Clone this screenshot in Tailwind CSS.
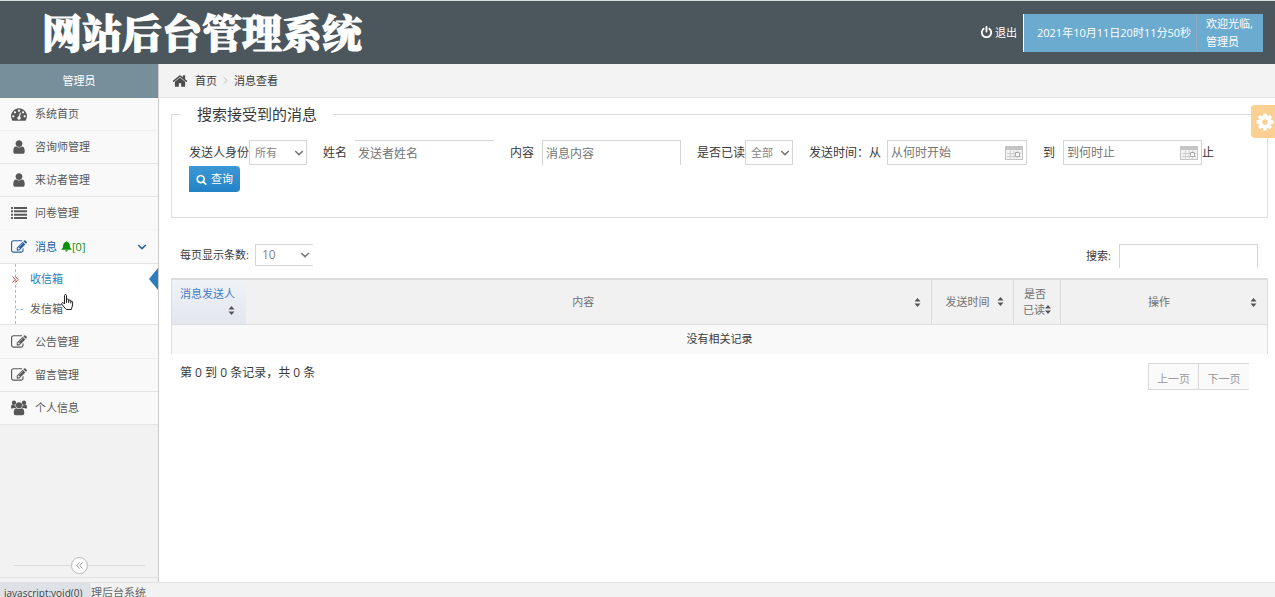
<!DOCTYPE html>
<html lang="zh-CN">
<head>
<meta charset="utf-8">
<title>网站后台管理系统</title>
<script src="https://cdn.jsdelivr.net/npm/@tailwindcss/browser@4"></script>
</head>
<body class="flex min-h-screen flex-col bg-white font-['Open_Sans','Noto_Sans_CJK_SC',sans-serif] text-[11px] leading-4 text-[#393939]">
<svg class="hidden" aria-hidden="true">
  <symbol id="user" viewBox="0 0 1792 1792"><path d="M1536 1399q0 109-62.500 187t-150.500 78h-854q-88 0-150.500-78t-62.500-187q0-85 8.500-160.500t31.500-152 58.500-131 94-89 134.500-34.500q131 128 313 128t313-128q76 0 134.500 34.500t94 89 58.500 131 31.500 152 8.500 160.500zm-256-887q0 159-112.500 271.500t-271.500 112.500-271.500-112.500-112.500-271.500 112.500-271.500 271.500-112.500 271.500 112.500 112.500 271.500z"/></symbol>
  <symbol id="edit" viewBox="0 0 1792 1792"><path d="M888 1184l116-116-152-152-116 116v56h96v96h56zm440-720q-16-16-33 1l-350 350q-17 17-1 33t33-1l350-350q17-17 1-33zm80 594v190q0 119-84.500 203.500t-203.500 84.500h-832q-119 0-203.500-84.500t-84.500-203.500v-832q0-119 84.500-203.500t203.500-84.500h832q63 0 117 25 15 7 18 23 3 17-9 29l-49 49q-14 14-32 8-23-6-45-6h-832q-66 0-113 47t-47 113v832q0 66 47 113t113 47h832q66 0 113-47t47-113v-126q0-13 9-22l64-64q15-15 35-7t20 29zm-96-738l288 288-672 672h-288v-288zm444 132l-92 92-288-288 92-92q28-28 68-28t68 28l152 152q28 28 28 68t-28 68z"/></symbol>
  <symbol id="home" viewBox="0 0 1792 1792"><path d="M1472 992v480q0 26-19 45t-45 19h-384v-384h-256v384h-384q-26 0-45-19t-19-45v-480q0-1 .5-3t.5-3l575-474 575 474q1 2 1 6zm223-69l-62 74q-8 9-21 11h-3q-13 0-21-7l-692-577-692 577q-12 8-24 7-13-2-21-11l-62-74q-8-10-7-23.500t11-21.500l719-599q32-26 76-26t76 26l244 204v-195q0-14 9-23t23-9h192q14 0 23 9t9 23v408l219 182q10 8 11 21.500t-7 23.500z"/></symbol>
  <symbol id="search" viewBox="0 0 1792 1792"><path d="M1216 832q0-185-131.500-316.500t-316.500-131.500-316.500 131.500-131.500 316.500 131.500 316.500 316.500 131.500 316.500-131.500 131.500-316.500zm512 832q0 52-38 90t-90 38q-54 0-90-38l-343-342q-179 124-399 124-143 0-273.500-55.500t-225-150-150-225-55.500-273.500 55.500-273.500 150-225 225-150 273.500-55.500 273.500 55.500 225 150 150 225 55.500 273.500q0 220-124 399l343 343q37 37 37 90z"/></symbol>
  <symbol id="cog" viewBox="0 0 1792 1792"><path d="M1152 896q0-106-75-181t-181-75-181 75-75 181 75 181 181 75 181-75 75-181zm512-109v222q0 12-8 23t-20 13l-185 28q-19 54-39 91 35 50 107 138 10 12 10 25t-9 23q-27 37-99 108t-94 71q-12 0-26-9l-138-108q-44 23-91 38-16 136-29 186-7 28-36 28h-222q-14 0-24.500-8.500t-11.500-21.500l-28-184q-49-16-90-37l-141 107q-10 9-25 9-14 0-25-11-126-114-165-168-7-10-7-23 0-12 8-23 15-21 51-66.500t54-70.500q-27-50-41-99l-183-27q-13-2-21-12.500t-8-23.500v-222q0-12 8-23t19-13l186-28q14-46 39-92-40-57-107-138-10-12-10-24 0-10 9-23 26-36 98.500-107.500t94.500-71.500q13 0 26 10l138 107q44-23 91-38 16-136 29-186 7-28 36-28h222q14 0 24.500 8.500t11.500 21.500l28 184q49 16 90 37l142-107q9-9 24-9 13 0 25 10 129 119 165 170 7 8 7 22 0 12-8 23-15 21-51 66.500t-54 70.500q26 50 41 98l183 28q13 2 21 12.500t8 23.500z"/></symbol>
  <symbol id="power" viewBox="0 0 1792 1792"><path d="M1664 896q0 156-61 298t-164 245-245 164-298 61-298-61-245-164-164-245-61-298q0-182 80.500-343t226.500-270q43-32 95.500-25t83.500 50q32 42 24.500 94.500t-49.500 84.500q-98 74-151.500 181t-53.500 228q0 104 40.500 198.500t109.500 163.500 163.500 109.500 198.500 40.500 198.500-40.500 163.500-109.500 109.500-163.500 40.500-198.500q0-121-53.500-228t-151.500-181q-42-32-49.500-84.500t24.500-94.500q31-43 84-50t95 25q146 109 226.500 270t80.500 343zm-640-768v640q0 52-38 90t-90 38-90-38-38-90v-640q0-52 38-90t90-38 90 38 38 90z"/></symbol>
  <symbol id="dash" viewBox="0 0 1792 1792"><path d="M384 1152q0-53-37.500-90.500t-90.500-37.500-90.500 37.500-37.500 90.500 37.500 90.500 90.500 37.500 90.500-37.500 37.500-90.500zm192-448q0-53-37.500-90.500t-90.500-37.500-90.500 37.500-37.500 90.500 37.500 90.500 90.500 37.500 90.500-37.500 37.500-90.500zm428 481l101-382q6-26-7.500-48.500t-38.500-29.500-48 6.500-30 39.500l-101 382q-60 5-107 43.500t-63 98.500q-20 77 20 146t117 89 146-20 89-117q16-60-6-117t-72-91zm660-33q0-53-37.500-90.500t-90.500-37.500-90.500 37.500-37.500 90.500 37.500 90.500 90.500 37.500 90.500-37.500 37.500-90.500zm-640-640q0-53-37.500-90.500t-90.500-37.500-90.500 37.500-37.500 90.500 37.500 90.500 90.500 37.500 90.500-37.500 37.500-90.500zm448 192q0-53-37.500-90.500t-90.500-37.500-90.500 37.500-37.500 90.500 37.500 90.500 90.500 37.500 90.500-37.500 37.500-90.500zm320 448q0 261-141 483-19 29-54 29h-1402q-35 0-54-29-141-221-141-483 0-182 71-348t191-286 286-191 348-71 348 71 286 191 191 286 71 348z"/></symbol>
  <symbol id="list" viewBox="0 0 16 16"><path d="M0 2h2v2H0zM3 2h13v2H3zM0 5.300h2v2H0zM3 5.300h13v2H3zM0 8.700h2v2H0zM3 8.700h13v2H3zM0 12h2v2H0zM3 12h13v2H3z"/></symbol>
  <symbol id="users" viewBox="0 0 16 16"><circle cx="3" cy="2.800" r="2.200"/><circle cx="13" cy="2.800" r="2.200"/><circle cx="8" cy="5.300" r="3.100"/><path d="M0 8V7q0-2.500 1.300-2.500Q3 5.600 4.300 5q0 2 1 3H3q-1 0-1.500.500Q0 8.700 0 8zM16 8V7q0-2.500-1.300-2.500Q13 5.600 11.700 5q0 2-1 3H13q1 0 1.500.500Q16 8.700 16 8zM2.700 13q0-4.800 2.700-4.800Q8 10 10.600 8.200q2.700 0 2.700 4.800 0 2.300-2 2.300H4.700q-2 0-2-2.300z"/></symbol>
  <symbol id="bell" viewBox="0 0 12 12"><path d="M5.200 1a.8.8 0 0 1 1.600 0Q9.600 1.600 9.600 5q0 3 2.200 4.600H.2Q2.400 8 2.400 5q0-3.400 2.800-4zM4.500 10.200h3q-.3 1.600-1.500 1.600t-1.500-1.600z"/></symbol>
  <symbol id="down" viewBox="0 0 10 6"><path d="M1.200 1 5 4.600 8.800 1" fill="none" stroke="currentColor" stroke-width="1.500"/></symbol>
  <symbol id="sort" viewBox="0 0 6 9"><path d="M3 0 6 3.600H0zM3 9 0 5.400h6z"/></symbol>
  <symbol id="cal" viewBox="0 0 18 14"><path fill="#c4c4c4" d="M0 0h18v14H0z"/><path fill="#f3f3f3" d="M1 4h16v9H1z"/><path d="M2 7.500h14M2 10.500h14M5.500 4.500v8M9 4.500v8M12.500 4.500v8" stroke="#cfcfcf" fill="none"/><path d="M10.500 6.500h4v4h-4z" fill="#fff" stroke="#aaa"/></symbol>
</svg>

<header class="flex h-16 items-center justify-between border-t border-[#d5dfdf] bg-[#4b575c] pr-3 pl-[42px] text-white">
  <h1 class="pb-1 font-['Noto_Serif_CJK_SC','Noto_Sans_CJK_SC',serif] text-[40px] leading-[56px] font-black whitespace-nowrap [-webkit-text-stroke:1px_white]">网站后台管理系统</h1>
  <div class="flex items-center">
    <a href="#" class="mr-[6px] flex items-center gap-[2px]"><svg class="size-[13px] fill-current"><use href="#power"/></svg>退出</a>
    <div class="flex h-[38px] items-stretch border-l border-white bg-[#6aabcf]">
      <time class="flex w-[173px] items-center border-r border-[#8fa9bd] pl-[13px] whitespace-nowrap">2021年10月11日20时11分50秒</time>
      <p class="flex w-[66px] flex-col justify-center pl-[9px] text-[11px] leading-[18px]"><span>欢迎光临,</span><span>管理员</span></p>
    </div>
  </div>
</header>

<div class="flex flex-1">
  <aside class="flex w-[159px] shrink-0 flex-col border-r border-[#ccc] bg-[#f2f2f2] text-[#585858]">
    <div class="flex h-[34px] items-center justify-center bg-[#778f9b] text-white">管理员</div>
    <nav>
      <a href="#" class="flex h-[33px] items-center gap-2 border-b border-[#f1f1f1] bg-[#f9f9f9] pl-[11px]"><svg class="size-4 fill-current"><use href="#dash"/></svg>系统首页</a>
      <a href="#" class="flex h-[33px] items-center gap-2 border-b border-[#e5e5e5] bg-[#f9f9f9] pl-[11px]"><svg class="size-4 fill-current"><use href="#user"/></svg>咨询师管理</a>
      <a href="#" class="flex h-[33px] items-center gap-2 border-b border-[#e5e5e5] bg-[#f9f9f9] pl-[11px]"><svg class="size-4 fill-current"><use href="#user"/></svg>来访者管理</a>
      <a href="#" class="flex h-[33px] items-center gap-2 border-b border-[#f5f5f5] bg-[#f9f9f9] pl-[11px]"><svg class="size-4 fill-current"><use href="#list"/></svg>问卷管理</a>
      <a href="#" class="flex h-[34px] items-center gap-2 border-b border-[#e5e5e5] bg-[#f9f9f9] pr-[11px] pl-[11px] text-[#2a5f9e]"><svg class="size-4 fill-current"><use href="#edit"/></svg><span class="flex flex-1 items-center">消息<span class="ml-1 flex items-center text-[#0a8f0a]"><svg class="size-[11px] fill-current"><use href="#bell"/></svg>[0]</span></span><svg class="h-[6px] w-[10px]"><use href="#down"/></svg></a>
      <div class="relative border-b border-[#e5e5e5] bg-white">
        <div class="absolute inset-y-0 left-[15px] border-l border-dashed border-[#9dbdd6]"></div>
        <a href="#" class="relative flex h-[30px] items-center pl-[30px] text-[#2b7dbc]"><svg class="absolute left-3 h-[7px] w-[7px]" viewBox="0 0 7 7" fill="none" stroke="#c0453a"><path d="M.5.500 3 3.500.5 6.500M3.500.500 6 3.500 3.500 6.500"/></svg>收信箱<svg class="absolute right-0 h-[22px] w-[9px] fill-[#2b7dbc]" viewBox="0 0 9 22"><path d="M9 0v22L0 11z"/></svg></a>
        <a href="#" class="relative flex h-[30px] items-center pl-[30px]"><span class="absolute left-4 w-[7px] border-t border-dashed border-[#9dbdd6]"></span>发信箱</a>
        <svg class="absolute top-[30px] left-[61px] h-4 w-[13px]" viewBox="0 0 13 16" fill="#fff" stroke="#222"><path d="M3.500 10V1.500q0-1 1-1t1 1V6q0-1 1-1t1.200 1v1q0-1 1-1t1.100 1v1q0-.8.900-.8t.9 1V11l-1.300 4.500H5.200L1 10.500Q.3 9 1.500 8.500 2.500 8.500 3.500 10zM5.500 6v3M7.700 7v2M9.800 8v1.500"/></svg>
      </div>
      <a href="#" class="flex h-[34px] items-center gap-2 border-b border-[#eee] bg-[#f9f9f9] pl-[11px]"><svg class="size-4 fill-current"><use href="#edit"/></svg>公告管理</a>
      <a href="#" class="flex h-[33px] items-center gap-2 border-b border-[#e5e5e5] bg-[#f9f9f9] pl-[11px]"><svg class="size-4 fill-current"><use href="#edit"/></svg>留言管理</a>
      <a href="#" class="flex h-[33px] items-center gap-2 border-b border-[#e5e5e5] bg-[#f9f9f9] pl-[11px]"><svg class="size-4 fill-current"><use href="#users"/></svg>个人信息</a>
    </nav>
    <div class="mt-auto mb-1 flex items-center border-b border-[#e0e0e0] px-[13px] pb-[3px]">
      <div class="flex-1 border-t border-[#dcdcdc]"></div>
      <button type="button" aria-label="收起菜单" class="flex size-[17px] items-center justify-center rounded-full border border-[#bbb] bg-white text-[#999]"><svg class="size-[7px]" viewBox="0 0 7 7" fill="none" stroke="currentColor"><path d="M3.500.500.8 3.500l2.700 3M6.500.500 3.800 3.500l2.700 3"/></svg></button>
      <div class="flex-1 border-t border-[#dcdcdc]"></div>
    </div>
  </aside>

  <main class="relative min-w-0 flex-1">
    <nav class="flex h-[34px] items-center border-b border-[#e5e5e5] bg-[#f3f3f3] pl-[13px]">
      <svg class="mr-[7px] size-4 fill-[#4c4c4c]"><use href="#home"/></svg><a href="#">首页</a>
      <svg class="mx-[6px] h-[7px] w-[5px]" viewBox="0 0 5 7" fill="none" stroke="#b2b6bf"><path d="M1 .5 4 3.500 1 6.500"/></svg><span>消息查看</span>
    </nav>
    <button type="button" aria-label="设置" class="absolute top-[41px] right-0 flex h-[33px] w-6 items-center justify-end rounded-l bg-[#fccf93]"><svg class="size-5 shrink-0 fill-white"><use href="#cog"/></svg></button>

    <div class="pt-1 pr-[7px] pl-3">
      <form>
        <fieldset class="border border-[#ddd] pr-4 pb-[25px] pl-[17px] text-[12px]">
          <legend class="-ml-2 px-4 text-[15px] leading-6">搜索接受到的消息</legend>
          <div class="mt-[14px] flex flex-wrap items-center gap-x-4 gap-y-px">
            <div class="flex items-center"><label for="role">发送人身份</label>
              <div class="relative"><select id="role" class="h-[25px] w-[58px] appearance-none border border-[#d5d5d5] bg-white pl-[5px] text-[11px] text-[#858585]"><option>所有</option></select><svg class="pointer-events-none absolute top-[10px] right-[3px] h-[6px] w-[10px] text-[#777]"><use href="#down"/></svg></div></div>
            <div class="flex items-center gap-2"><label for="name">姓名</label><input id="name" placeholder="发送者姓名" class="h-[25px] w-[139px] border-t border-[#d5d5d5] px-[3px] text-[12px] placeholder:text-[#757575]"></div>
            <div class="flex items-center gap-2"><label for="content">内容</label><input id="content" placeholder="消息内容" class="h-[25px] w-[139px] border border-b-0 border-[#d5d5d5] px-[3px] text-[12px] placeholder:text-[#757575]"></div>
            <div class="flex items-center"><label for="read">是否已读</label>
              <div class="relative"><select id="read" class="h-[25px] w-12 appearance-none border border-[#d5d5d5] bg-white pl-[5px] text-[11px] text-[#858585]"><option>全部</option></select><svg class="pointer-events-none absolute top-[10px] right-[3px] h-[6px] w-[10px] text-[#777]"><use href="#down"/></svg></div></div>
            <div class="flex items-center gap-[6px]"><label for="from">发送时间：从</label>
              <div class="relative"><input id="from" placeholder="从何时开始" class="h-[25px] w-[140px] border border-[#d5d5d5] px-[3px] text-[12px] placeholder:text-[#757575]"><svg class="absolute top-[6px] right-1 h-[14px] w-[18px]"><use href="#cal"/></svg></div></div>
            <div class="flex items-center"><label for="to" class="mr-2">到</label>
              <div class="relative"><input id="to" placeholder="到何时止" class="h-[25px] w-[139px] border border-[#d5d5d5] px-[3px] text-[12px] placeholder:text-[#757575]"><svg class="absolute top-[6px] right-1 h-[14px] w-[18px]"><use href="#cal"/></svg></div><span>止</span></div>
            <div class="w-full"><button type="submit" class="flex h-[26px] items-center gap-1 rounded-r-sm bg-linear-to-b from-[#3b98d6] to-[#2283c5] px-[7px] text-[11px] text-white"><svg class="size-[11px] fill-current"><use href="#search"/></svg>查询</button></div>
          </div>
        </fieldset>
      </form>

      <div class="mt-[26px] flex items-start justify-between pr-[10px] pl-[9px]">
        <div class="flex items-center gap-[6px]"><label for="len">每页显示条数:</label>
          <div class="relative"><select id="len" class="h-[22px] w-[58px] appearance-none border border-r-0 border-[#d5d5d5] bg-white pl-[6px] text-[12px] text-[#858585]"><option>10</option></select><svg class="pointer-events-none absolute top-2 right-[3px] h-[6px] w-[10px] text-[#777]"><use href="#down"/></svg></div></div>
        <div class="flex items-center gap-2"><label for="q">搜索:</label><input id="q" class="h-6 w-[139px] border border-b-0 border-[#d5d5d5] px-1 text-[12px]"></div>
      </div>

      <table class="mt-[10px] w-full table-fixed border-collapse border-x border-[#ddd]">
        <colgroup><col class="w-[74px]"><col><col class="w-[82px]"><col class="w-[47px]"><col class="w-[207px]"></colgroup>
        <thead>
          <tr class="h-[45px] border-t-2 border-b border-[#ddd] bg-[#f1f1f1] text-[#707070]">
            <th scope="col" class="bg-linear-to-b from-[#eff3f8] to-[#e3e7ed] font-normal"><div class="relative pb-4 pl-2 text-left text-[#3f7cc4]">消息发送人<svg class="absolute right-[11px] bottom-[3px] h-[9px] w-[7px] fill-[#555]"><use href="#sort"/></svg></div></th>
            <th scope="col" class="border-r border-[#ddd] font-normal"><div class="relative pr-[10px]">内容<svg class="absolute top-1 right-[10px] h-[9px] w-[7px] fill-[#555]"><use href="#sort"/></svg></div></th>
            <th scope="col" class="border-r border-[#ddd] font-normal"><div class="flex items-center justify-center gap-[7px] pl-1">发送时间<svg class="h-[9px] w-[7px] fill-[#555]"><use href="#sort"/></svg></div></th>
            <th scope="col" class="border-r border-[#ddd] font-normal"><div class="-ml-1">是否<br><span class="inline-flex items-center pl-1">已读<svg class="h-[9px] w-[6px] fill-[#555]"><use href="#sort"/></svg></span></div></th>
            <th scope="col" class="font-normal"><div class="relative pr-[10px]">操作<svg class="absolute top-1 right-[10px] h-[9px] w-[7px] fill-[#555]"><use href="#sort"/></svg></div></th>
          </tr>
        </thead>
        <tbody><tr class="h-[30px] bg-[#f9f9f9] text-center"><td colspan="5">没有相关记录</td></tr></tbody>
      </table>

      <div class="flex items-start justify-between pt-[9px] pr-[19px] pl-[9px]">
        <p class="text-[12px] leading-5">第 0 到 0 条记录，共 0 条</p>
        <div class="flex h-[27px] border border-r-0 border-[#d9d9d9] bg-[#fafafa] text-[#999]">
          <button type="button" disabled class="w-[50px] border-r border-[#d9d9d9] pt-1">上一页</button>
          <button type="button" disabled class="w-[50px] pt-1">下一页</button>
        </div>
      </div>
    </div>
  </main>
</div>

<footer class="relative h-[15px] overflow-hidden border-t border-[#e0e0e0] bg-[#f2f2f2] pl-[91px]">
  <p class="pt-[2px] text-[#666]">理后台系统</p>
  <div class="absolute top-0 left-0 h-5 w-[91px] rounded-tr-sm bg-[#dee1e6] pt-[2px] pl-1 text-[10px] text-[#444]">javascript:void(0)</div>
</footer>
</body>
</html>
